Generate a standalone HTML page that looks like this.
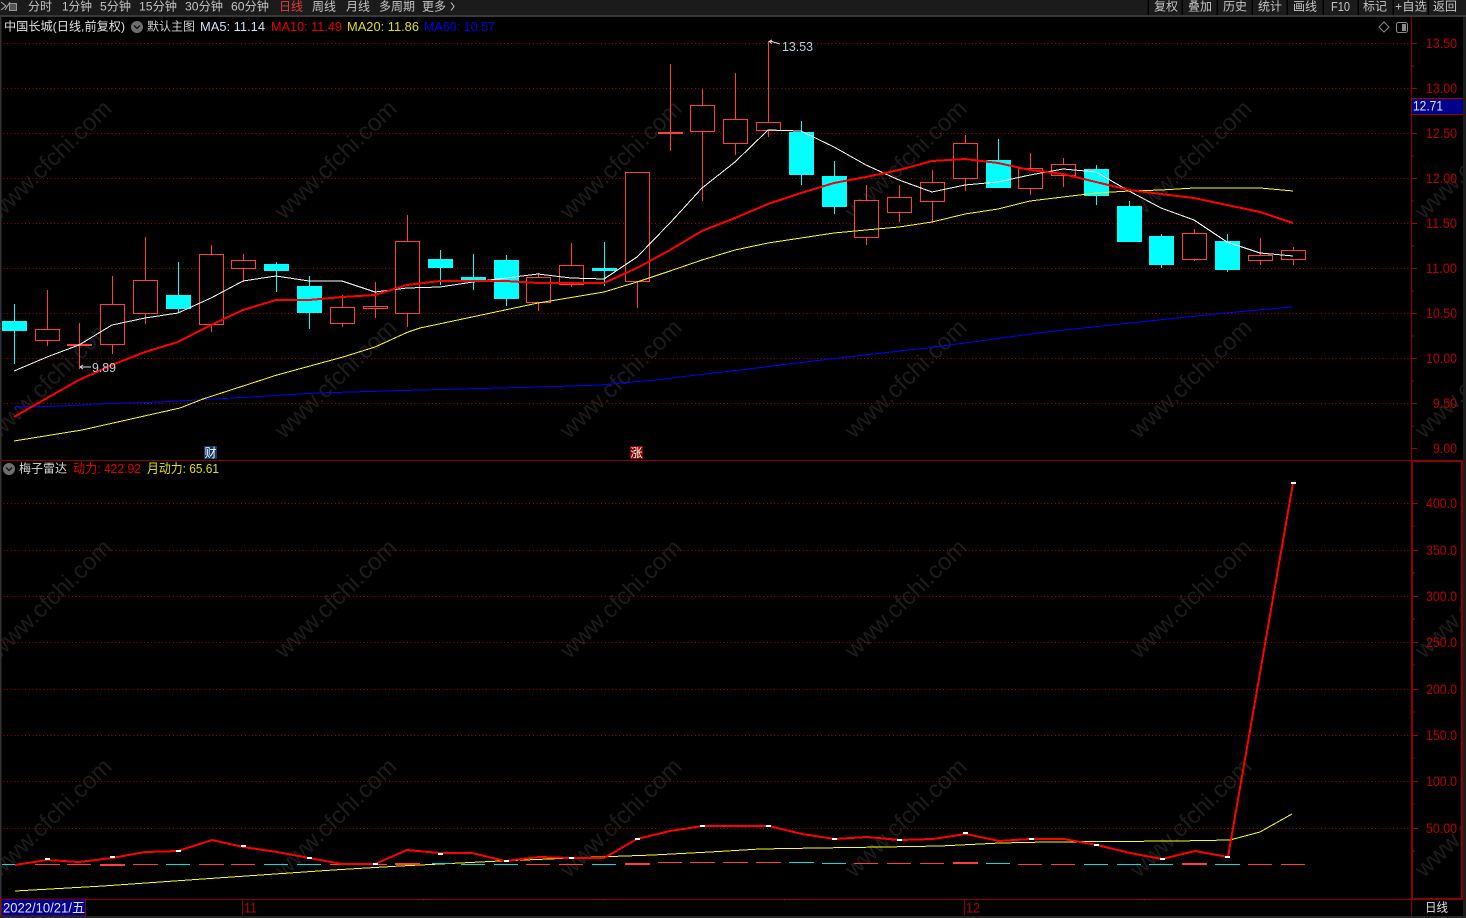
<!DOCTYPE html>
<html lang="zh"><head><meta charset="utf-8"><title>中国长城</title>
<style>
html,body{margin:0;padding:0;background:#000;width:1466px;height:918px;overflow:hidden}
svg{display:block;position:absolute;left:0;top:0}
text{font-family:"Liberation Sans","Noto Sans CJK SC",sans-serif;font-size:12px}
.wm text{font-size:24px;fill:#1c1c1c;text-anchor:middle;dominant-baseline:central}
.ax text{font-size:14px;fill:#b80000;text-anchor:end;dominant-baseline:central}
.tb text{fill:#c4c4c4;dominant-baseline:central}
.hd text{dominant-baseline:central}
.crisp{shape-rendering:crispEdges}
polyline{fill:none}
</style></head><body>
<svg width="1466" height="918" viewBox="0 0 1466 918" xmlns="http://www.w3.org/2000/svg">
<rect width="1466" height="918" fill="#000"/>
<!-- watermarks -->
<g class="wm">
<text x="51" y="160" transform="rotate(-44 51 160)">www.cfchi.com</text><text x="336" y="160" transform="rotate(-44 336 160)">www.cfchi.com</text><text x="621" y="160" transform="rotate(-44 621 160)">www.cfchi.com</text><text x="906" y="160" transform="rotate(-44 906 160)">www.cfchi.com</text><text x="1191" y="160" transform="rotate(-44 1191 160)">www.cfchi.com</text><text x="1476" y="160" transform="rotate(-44 1476 160)">www.cfchi.com</text>
<text x="51" y="379" transform="rotate(-44 51 379)">www.cfchi.com</text><text x="336" y="379" transform="rotate(-44 336 379)">www.cfchi.com</text><text x="621" y="379" transform="rotate(-44 621 379)">www.cfchi.com</text><text x="906" y="379" transform="rotate(-44 906 379)">www.cfchi.com</text><text x="1191" y="379" transform="rotate(-44 1191 379)">www.cfchi.com</text><text x="1476" y="379" transform="rotate(-44 1476 379)">www.cfchi.com</text>
<text x="51" y="599" transform="rotate(-44 51 599)">www.cfchi.com</text><text x="336" y="599" transform="rotate(-44 336 599)">www.cfchi.com</text><text x="621" y="599" transform="rotate(-44 621 599)">www.cfchi.com</text><text x="906" y="599" transform="rotate(-44 906 599)">www.cfchi.com</text><text x="1191" y="599" transform="rotate(-44 1191 599)">www.cfchi.com</text><text x="1476" y="599" transform="rotate(-44 1476 599)">www.cfchi.com</text>
<text x="51" y="818" transform="rotate(-44 51 818)">www.cfchi.com</text><text x="336" y="818" transform="rotate(-44 336 818)">www.cfchi.com</text><text x="621" y="818" transform="rotate(-44 621 818)">www.cfchi.com</text><text x="906" y="818" transform="rotate(-44 906 818)">www.cfchi.com</text><text x="1191" y="818" transform="rotate(-44 1191 818)">www.cfchi.com</text><text x="1476" y="818" transform="rotate(-44 1476 818)">www.cfchi.com</text>
</g>
<!-- dotted grids -->
<path class="crisp" d="M0 43.5H1411M0 88.5H1411M0 133.5H1411M0 178.5H1411M0 223.5H1411M0 268.5H1411M0 313.5H1411M0 358.5H1411M0 403.5H1411M0 503.5H1411M0 550.5H1411M0 596.5H1411M0 642.5H1411M0 689.5H1411M0 735.5H1411M0 781.5H1411M0 828.5H1411" stroke="#a80000" stroke-width="1" stroke-dasharray="1 2.6" fill="none"/>
<!-- candle wicks -->
<path class="crisp" stroke="#ff3d3d" stroke-width="1" fill="none" d="M47.5 290V346M79.5 323V369M112.5 276V354M145.5 237V324M211.5 245V332M243.5 254V282M342.5 295V327M375.5 282V318M407.5 215V327M538.5 273V311M571.5 243V287M637.5 172V308M670.5 64V151M702.5 89V201M735.5 73V155M768.5 41V137M866.5 185V245M899.5 185V222M932.5 170V223M965.5 135V191M1030.5 153V195M1063.5 158V187M1194.5 229V261M1260.5 238V265M1293.5 247V265"/>
<path class="crisp" stroke="#00ffff" stroke-width="1" fill="none" d="M14.5 304V364M178.5 262V313M276.5 262V292M309.5 276V329M440.5 250V285M473.5 254V290M506.5 255V306M604.5 242V286M801.5 121V185M834.5 161V214M998.5 139V188M1096.5 165V205M1129.5 201V242M1161.5 234V268M1227.5 234V272"/>
<!-- red bodies -->
<path class="crisp" stroke="#ff3d3d" stroke-width="1" fill="#000" d="M35.5 329.5h24v11h-24zM100.5 304.5h24v40h-24zM133.5 280.5h24v33h-24zM199.5 254.5h24v70h-24zM231.5 260.5h24v8h-24zM330.5 307.5h24v16h-24zM363.5 306.5h24v2h-24zM395.5 241.5h24v72h-24zM526.5 277.5h24v25h-24zM559.5 265.5h24v19h-24zM625.5 172.5h24v109h-24zM690.5 105.5h24v26h-24zM723.5 119.5h24v24h-24zM756.5 122.5h24v8h-24zM854.5 200.5h24v37h-24zM887.5 197.5h24v15h-24zM920.5 182.5h24v19h-24zM953.5 143.5h24v35h-24zM1018.5 168.5h24v20h-24zM1051.5 164.5h24v11h-24zM1182.5 233.5h24v26h-24zM1248.5 255.5h24v5h-24zM1281.5 250.5h24v9h-24z"/>
<path class="crisp" fill="#ff3d3d" d="M67 344h25v2H67zM658 132h25v2h-25z"/>
<!-- cyan bodies -->
<path class="crisp" fill="#00ffff" d="M2 321h25v10H2zM166 295h25v14h-25zM264 264h25v7h-25zM297 286h25v27h-25zM428 259h25v9h-25zM461 277h25v3h-25zM494 260h25v39h-25zM592 268h25v3h-25zM789 132h25v43h-25zM822 176h25v31h-25zM986 160h25v28h-25zM1084 169h25v27h-25zM1117 206h25v36h-25zM1149 236h25v29h-25zM1215 241h25v29h-25z"/>
<!-- MA lines -->
<polyline class="crisp" stroke="#0000ff" stroke-width="1" points="14,407 63,406 97,404 160,402 233,398 317,393 420,390 540,387 600,385 654,380 740,370 830,359 935,347 1046,332 1130,323 1225,313 1292,307"/>
<polyline class="crisp" stroke="#ffff00" stroke-width="1" points="14,441 82,430 180,408 203,399 277,375 343,357 375,347 408,332 420,328 538,303 604,292 637,282 670,271 702,260 735,250 768,243 801,238 834,233 866,230 899,227 932,222 965,214 998,209 1030,201 1063,197 1096,193 1129,191 1161,190 1194,188 1227,188 1260,188 1293,191"/>
<polyline stroke="#ffffff" stroke-width="1" class="crisp" points="14,371 47,357 79,345 112,325 145,318 178,313 211,298 243,281 276,276 309,281 342,281 375,292 407,288 440,287 473,282 506,278 538,274 571,278 604,279 637,257 670,223 702,188 735,162 768,130 801,131 834,147 866,165 899,180 932,192 965,185 998,182 1030,175 1063,169 1096,172 1129,191 1161,208 1194,220 1227,242 1260,253 1293,256"/>
<polyline stroke="#ff0000" stroke-width="2" class="crisp" points="14,417 33,406 47,398 79,380 112,365 145,352 178,342 211,325 243,310 276,300 309,300 342,297 375,295 407,285 440,281 473,281 506,281 538,283 571,283 604,283 637,268 670,250 702,231 735,218 768,204 801,193 834,183 866,177 899,170 932,161 965,159 998,163 1030,170 1063,174 1096,182 1129,190 1161,194 1194,198 1227,205 1260,212 1293,223"/>
<!-- high/low labels -->
<path d="M770 41L780 44M769 41.5l3-1.5M769 41.5l3 2" stroke="#ddd" stroke-width="1" fill="none"/>
<text x="782" y="51" textLength="31" lengthAdjust="spacingAndGlyphs" fill="#bccbd8" style="font-size:13px">13.53</text>
<path d="M80 367H91M80 367l3-2M80 367l3 2" stroke="#ddd" stroke-width="1" fill="none"/>
<text x="92" y="372" textLength="24" lengthAdjust="spacingAndGlyphs" fill="#bccbd8" style="font-size:13px">9.89</text>
<!-- 财 / 涨 -->
<rect x="204" y="446" width="13" height="13" fill="#12386b"/>
<text x="204.5" y="457" fill="#fff" textLength="12" lengthAdjust="spacingAndGlyphs">财</text>
<rect x="630" y="446" width="13" height="13" fill="#8a0000"/>
<text x="630.5" y="457" fill="#fff" textLength="12" lengthAdjust="spacingAndGlyphs">涨</text>
<!-- indicator yellow -->
<polyline class="crisp" stroke="#ffff00" stroke-width="1" points="15,891 103,886 217,878 333,870 400,866 500,861 597,857 653,855 710,852 760,849 817,848 883,847 940,846 1000,843 1047,842 1177,841 1230,840 1260,832 1292,814"/>
<!-- indicator dashes -->
<path class="crisp" stroke="#ff3d3d" stroke-width="1" fill="none" d="M35 864.5h25M67 864.5h24M133 864.5h25M199 864.5h25M231 864.5h24M330 864.5h24M363 864.5h24M526 864.5h24M559 864.5h24M658 862.5h24M690 862.5h25M723 862.5h25M756 862.5h25M854 863.5h24M887 863.5h24M920 863.5h24M1018 864.5h24M1051 864.5h24M1248 864.5h24M1281 864.5h24"/>
<path class="crisp" fill="#ff3d3d" d="M100 864h25v2h-25zM395 863h25v2h-25zM625 863h25v2h-25zM953 862h25v2h-25zM1182 863h25v2h-25z"/>
<path class="crisp" stroke="#00e0e0" stroke-width="1" fill="none" d="M2 864.5h13M166 864.5h24M264 864.5h24M297 864.5h24M432 863.5h20M461 864.5h24M494 864.5h24M592 864.5h24M789 862.5h25M822 863.5h24M986 863.5h24M1084 864.5h24M1117 864.5h24M1149 864.5h24M1215 864.5h25"/>
<!-- indicator red -->
<polyline stroke="#ff0000" stroke-width="2" class="crisp" points="15,865 47,860 79,862 112,858 145,852 178,851 212,840 243,847 277,852 309,858 342,864 375,864 407,850 440,853 472,853 505,861 539,857 571,858 604,858 637,839 670,831 703,826 736,826 769,826 802,834 835,839 867,837 900,840 933,839 966,834 999,841 1031,839 1064,839 1097,845 1130,853 1162,859 1195,851 1228,857 1293,483"/>
<path class="crisp" fill="#fff" d="M45 858h5v2h-5zM110 856h5v2h-5zM176 850h5v2h-5zM241 845h5v2h-5zM307 857h5v2h-5zM373 863h5v2h-5zM438 853h5v2h-5zM504 860h5v2h-5zM569 857h5v2h-5zM635 838h5v2h-5zM700 825h5v2h-5zM766 825h5v2h-5zM832 838h5v2h-5zM897 839h5v2h-5zM963 832h5v2h-5zM1029 838h5v2h-5zM1094 844h5v2h-5zM1160 858h5v2h-5zM1225 856h5v2h-5zM1291 482h5v2h-5z"/>
<!-- axes and frames -->
<rect x="0" y="17" width="1.5" height="901" fill="#333"/>
<rect x="1463" y="17" width="3" height="901" fill="#1c1c1c"/>
<path class="crisp" stroke="#8b0000" stroke-width="1" fill="none" d="M1411.5 17V460"/>
<path class="crisp" stroke="#8b0000" stroke-width="1" fill="none" d="M0 460.5H1411"/>
<rect x="1411" y="460" width="52" height="2" fill="#8b0000"/>
<rect x="1411" y="460" width="2" height="440" fill="#8b0000"/>
<rect x="1461" y="460" width="2" height="440" fill="#8b0000"/>
<rect x="1411" y="898" width="52" height="2" fill="#8b0000"/>
<path class="crisp" stroke="#8b0000" stroke-width="1" fill="none" d="M0 899.5H1411M1411.5 899V916M242.5 899V915M964.5 899V915M423.5 899V901M603.5 899V901M784.5 899V901M1144.5 899V901"/>
<path class="crisp" stroke="#a80000" stroke-width="1" fill="none" d="M1412 43.5h5M1412 88.5h5M1412 133.5h5M1412 178.5h5M1412 223.5h5M1412 268.5h5M1412 313.5h5M1412 358.5h5M1412 403.5h5M1412 448.5h5M1412 66h2M1412 111h2M1412 156h2M1412 201h2M1412 246h2M1412 291h2M1412 336h2M1412 381h2M1412 426h2M1413 503.5h5M1413 550.5h5M1413 596.5h5M1413 642.5h5M1413 689.5h5M1413 735.5h5M1413 781.5h5M1413 828.5h5M1413 526h2M1413 573h2M1413 619h2M1413 665h2M1413 712h2M1413 758h2M1413 804h2M1413 851h2"/>
<g class="ax">
<text x="1457" y="43" textLength="31" lengthAdjust="spacingAndGlyphs">13.50</text><text x="1457" y="88" textLength="31" lengthAdjust="spacingAndGlyphs">13.00</text><text x="1457" y="133" textLength="31" lengthAdjust="spacingAndGlyphs">12.50</text><text x="1457" y="178" textLength="31" lengthAdjust="spacingAndGlyphs">12.00</text><text x="1457" y="223" textLength="31" lengthAdjust="spacingAndGlyphs">11.50</text><text x="1457" y="268" textLength="31" lengthAdjust="spacingAndGlyphs">11.00</text><text x="1457" y="313" textLength="31" lengthAdjust="spacingAndGlyphs">10.50</text><text x="1457" y="358" textLength="31" lengthAdjust="spacingAndGlyphs">10.00</text><text x="1457" y="403" textLength="24" lengthAdjust="spacingAndGlyphs">9.50</text><text x="1457" y="448" textLength="24" lengthAdjust="spacingAndGlyphs">9.00</text>
<text x="1457" y="503" textLength="31" lengthAdjust="spacingAndGlyphs">400.0</text><text x="1457" y="550" textLength="31" lengthAdjust="spacingAndGlyphs">350.0</text><text x="1457" y="596" textLength="31" lengthAdjust="spacingAndGlyphs">300.0</text><text x="1457" y="642" textLength="31" lengthAdjust="spacingAndGlyphs">250.0</text><text x="1457" y="689" textLength="31" lengthAdjust="spacingAndGlyphs">200.0</text><text x="1457" y="735" textLength="31" lengthAdjust="spacingAndGlyphs">150.0</text><text x="1457" y="781" textLength="31" lengthAdjust="spacingAndGlyphs">100.0</text><text x="1457" y="828" textLength="31" lengthAdjust="spacingAndGlyphs">50.00</text>
</g>
<!-- 12.71 tag -->
<rect x="1412" y="98" width="51" height="17" fill="#00008b"/>
<path class="crisp" stroke="#a00000" fill="none" d="M1412 98.5h51M1412 114.5h51"/>
<text x="1413" y="110.5" fill="#e0e0ff" textLength="30" lengthAdjust="spacingAndGlyphs" style="font-size:14px">12.71</text>
<!-- top-right icons -->
<path d="M1384 22l5 5-5 5-5-5z" fill="none" stroke="#8a8a8a" stroke-width="1"/>
<rect x="1396.5" y="22.5" width="11" height="10" rx="2" fill="none" stroke="#8a8a8a" stroke-width="1"/>
<rect x="1402" y="24" width="4" height="7" fill="#8a8a8a"/>
<!-- toolbar -->
<rect x="0" y="0" width="1466" height="16" fill="#1b1b1b"/>
<rect x="0" y="15" width="1466" height="2" fill="#383838"/>
<path class="crisp" stroke="#000" stroke-width="1.5" fill="none" d="M1148 0V15M1182 0V15M1217 0V15M1252 0V15M1287 0V15M1323 0V15M1358 0V15M1393 0V15M1428 0V15"/>
<path d="M1 2l5 4-5 4M10 2l-5 8" fill="none" stroke="#aaa" stroke-width="1"/>
<rect x="9.5" y="3.5" width="7" height="7" fill="#555" stroke="#999" stroke-width="1"/>
<g class="tb">
<text x="28" y="6.5" textLength="24" lengthAdjust="spacingAndGlyphs">分时</text>
<text x="62" y="6.5" textLength="30" lengthAdjust="spacingAndGlyphs">1分钟</text>
<text x="100" y="6.5" textLength="31" lengthAdjust="spacingAndGlyphs">5分钟</text>
<text x="139" y="6.5" textLength="38" lengthAdjust="spacingAndGlyphs">15分钟</text>
<text x="185" y="6.5" textLength="38" lengthAdjust="spacingAndGlyphs">30分钟</text>
<text x="231" y="6.5" textLength="38" lengthAdjust="spacingAndGlyphs">60分钟</text>
<text x="279" y="6.5" textLength="24" lengthAdjust="spacingAndGlyphs" style="fill:#e83a3a">日线</text>
<text x="312" y="6.5" textLength="24" lengthAdjust="spacingAndGlyphs">周线</text>
<text x="346" y="6.5" textLength="24" lengthAdjust="spacingAndGlyphs">月线</text>
<text x="379" y="6.5" textLength="36" lengthAdjust="spacingAndGlyphs">多周期</text>
<text x="422" y="6.5" textLength="24" lengthAdjust="spacingAndGlyphs">更多</text>
<path d="M451 2.5l3 4-3 4" fill="none" stroke="#c4c4c4" stroke-width="1"/>
<text x="1154" y="6.5" textLength="24" lengthAdjust="spacingAndGlyphs">复权</text>
<text x="1188" y="6.5" textLength="24" lengthAdjust="spacingAndGlyphs">叠加</text>
<text x="1223" y="6.5" textLength="24" lengthAdjust="spacingAndGlyphs">历史</text>
<text x="1258" y="6.5" textLength="24" lengthAdjust="spacingAndGlyphs">统计</text>
<text x="1293" y="6.5" textLength="24" lengthAdjust="spacingAndGlyphs">画线</text>
<text x="1331" y="6.5" textLength="19" lengthAdjust="spacingAndGlyphs" style="font-size:13px">F10</text>
<text x="1363" y="6.5" textLength="24" lengthAdjust="spacingAndGlyphs">标记</text>
<text x="1395" y="6.5" textLength="32" lengthAdjust="spacingAndGlyphs">+自选</text>
<text x="1433" y="6.5" textLength="24" lengthAdjust="spacingAndGlyphs">返回</text>
</g>
<!-- headers -->
<g class="hd">
<text x="4" y="26.5" fill="#e0e0e0" textLength="121" lengthAdjust="spacingAndGlyphs">中国长城(日线,前复权)</text>
<circle cx="137" cy="27" r="6" fill="#6e6e6e"/><path d="M134 25.5l3 3 3-3" stroke="#111" stroke-width="1.3" fill="none"/>
<text x="147" y="26.5" fill="#cfcfcf" textLength="48" lengthAdjust="spacingAndGlyphs">默认主图</text>
<text x="200" y="26.5" fill="#cfe0f0" textLength="65" lengthAdjust="spacingAndGlyphs" style="font-size:13px">MA5: 11.14</text>
<text x="271" y="26.5" fill="#e60000" textLength="71" lengthAdjust="spacingAndGlyphs" style="font-size:13px">MA10: 11.49</text>
<text x="347" y="26.5" fill="#e0e000" textLength="72" lengthAdjust="spacingAndGlyphs" style="font-size:13px">MA20: 11.86</text>
<text x="424" y="26.5" fill="#0000e6" textLength="71" lengthAdjust="spacingAndGlyphs" style="font-size:13px">MA60: 10.57</text>
<circle cx="9" cy="469" r="6" fill="#6e6e6e"/><path d="M6 467.5l3 3 3-3" stroke="#111" stroke-width="1.3" fill="none"/>
<text x="19" y="468.5" fill="#d8d8d8" textLength="48" lengthAdjust="spacingAndGlyphs">梅子雷达</text>
<text x="73" y="468.5" fill="#e60000" textLength="68" lengthAdjust="spacingAndGlyphs" style="font-size:13px">动力: 422.92</text>
<text x="147" y="468.5" fill="#e0e000" textLength="72" lengthAdjust="spacingAndGlyphs" style="font-size:13px">月动力: 65.61</text>
<!-- bottom -->
<rect x="1.5" y="899" width="84" height="17" fill="#00008b" stroke="#8b0000" stroke-width="1"/>
<text x="3" y="907.5" fill="#e0e0ff" textLength="82" lengthAdjust="spacingAndGlyphs" style="font-size:14px">2022/10/21/五</text>
<text x="244" y="907.5" fill="#b80000" textLength="13" lengthAdjust="spacingAndGlyphs" style="font-size:14px">11</text>
<text x="966" y="907.5" fill="#b80000" textLength="14" lengthAdjust="spacingAndGlyphs" style="font-size:14px">12</text>
<text x="1425" y="907.5" fill="#e0e0e0" textLength="23" lengthAdjust="spacingAndGlyphs">日线</text>
</g>
<rect x="0" y="916" width="1466" height="2" fill="#262626"/>
</svg>
</body></html>
